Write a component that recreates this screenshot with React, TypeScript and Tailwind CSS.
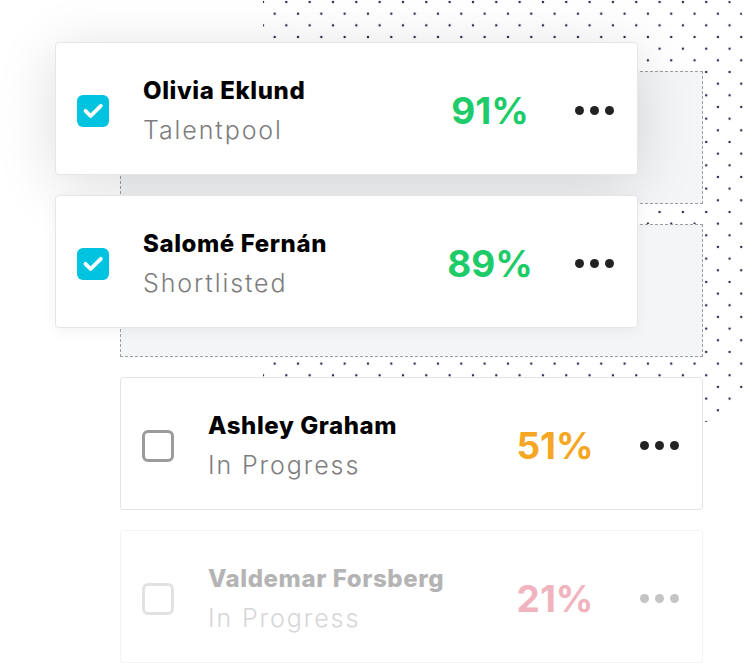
type Person = {
    name: string;
    status: string;
    score: number;
    checked: boolean;
    scoreColor: string;
};

const people: Person[] = [
    { name: "Olivia Eklund", status: "Talentpool", score: 91, checked: true, scoreColor: "text-[#1dcb69]" },
    { name: "Salomé Fernán", status: "Shortlisted", score: 89, checked: true, scoreColor: "text-[#1dcb69]" },
    { name: "Ashley Graham", status: "In Progress", score: 51, checked: false, scoreColor: "text-[#f5a623]" },
    { name: "Valdemar Forsberg", status: "In Progress", score: 21, checked: false, scoreColor: "text-[#f1b4be]" },
];

function Checkbox({ checked, faded }: { checked: boolean; faded?: boolean }) {
    if (checked) {
        return (
            <div className="w-8 h-8 rounded-[6px] bg-[#00c3df] flex items-center justify-center shrink-0">
                <svg width="32" height="32" viewBox="0 0 32 32" fill="none">
                    <path
                        d="M8.5 15.8 L13.6 21 L23.8 10.8"
                        stroke="white"
                        strokeWidth="3.8"
                        strokeLinecap="round"
                        strokeLinejoin="round"
                    />
                </svg>
            </div>
        );
    }
    return (
        <div
            className={
                faded
                    ? "w-8 h-8 rounded-[6px] border-[3px] border-[#e2e2e2] shrink-0"
                    : "w-8 h-8 rounded-[6px] border-[3px] border-[#9b9b9b] shrink-0"
            }
        />
    );
}

function Card({ person, faded, className }: { person: Person; faded?: boolean; className: string }) {
    const dot = faded ? "w-[9px] h-[9px] rounded-full bg-[#c4c4c4]" : "w-[9px] h-[9px] rounded-full bg-[#222222]";
    return (
        <div className={className}>
            <div className="flex items-center h-full pl-[21px] pr-[23px] pt-[4px]">
                <Checkbox checked={person.checked} faded={faded} />
                <div className="flex-1 ml-[34px]">
                    <div
                        className={
                            faded
                                ? "text-[24px] leading-[28px] font-extrabold tracking-[0.6px] text-[#b4b4b4]"
                                : "text-[24px] leading-[28px] font-extrabold tracking-[0.6px] text-black"
                        }
                    >
                        {person.name}
                    </div>
                    <div
                        className={
                            faded
                                ? "mt-[10px] text-[25px] leading-[30px] font-light tracking-[1.9px] text-[#d6d6d6]"
                                : "mt-[10px] text-[25px] leading-[30px] font-light tracking-[1.9px] text-[#7d7d7d]"
                        }
                    >
                        {person.status}
                    </div>
                </div>
                <div className={`w-[100px] text-center text-[37px] leading-none font-bold ${person.scoreColor}`}>
                    {person.score}%
                </div>
                <div className="w-10 ml-[34px] flex items-center justify-center gap-[6px]">
                    <span className={dot} />
                    <span className={dot} />
                    <span className={dot} />
                </div>
            </div>
        </div>
    );
}

export default function App() {
    return (
        <div className="relative w-[756px] h-[666px] overflow-hidden bg-white font-['Inter','Noto_Sans',sans-serif]">
            {/* dotted backdrop */}
            <div className="absolute left-[263px] top-[-8px] w-[487px] h-[430px] rounded-r-[48px] bg-[radial-gradient(circle,#2a2c4a_1px,transparent_1.6px),radial-gradient(circle,#2a2c4a_1px,transparent_1.6px)] bg-[length:23.33px_23.33px] bg-[position:0px_10px,11.67px_-1.67px]" />

            <div className="relative flex flex-col gap-5 pl-[120px] pt-[71px] w-[703px]">
                <div className="h-[133px] border border-dashed border-[#9d9ea6] bg-[#f4f5f7]">
                    <Card
                        person={people[0]}
                        className="relative left-[-66px] top-[-30px] w-[583px] h-[133px] bg-white border border-[#e6e6e8] rounded-[4px] shadow-[0_10px_60px_rgba(0,0,0,0.14)]"
                    />
                </div>
                <div className="h-[133px] border border-dashed border-[#9d9ea6] bg-[#f4f5f7]">
                    <Card
                        person={people[1]}
                        className="relative left-[-66px] top-[-30px] w-[583px] h-[133px] bg-white border border-[#e6e6e8] rounded-[4px] shadow-[0_3px_14px_rgba(0,0,0,0.05)]"
                    />
                </div>
                <Card
                    person={people[2]}
                    className="w-[583px] h-[133px] bg-white border border-[#e4e4e4] rounded-[3px]"
                />
                <Card
                    person={people[3]}
                    faded
                    className="w-[583px] h-[133px] bg-white border border-[#f3f3f3] rounded-[3px]"
                />
            </div>
        </div>
    );
}
